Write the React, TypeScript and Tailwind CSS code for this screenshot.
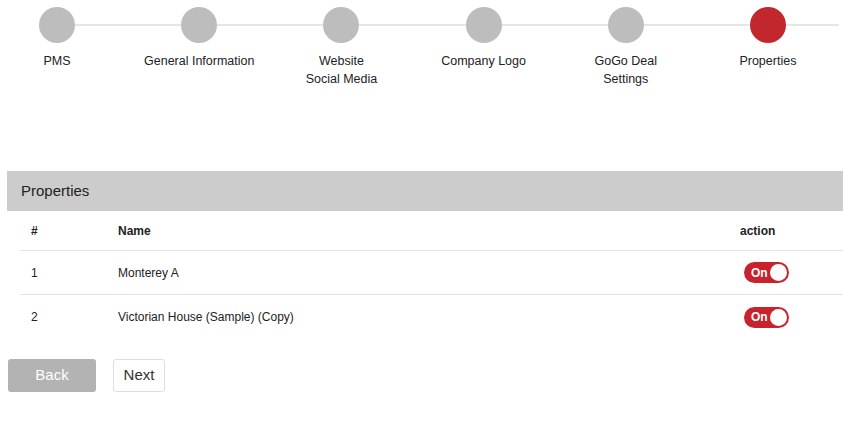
import React from "react";

const steps = [
  { label: ["PMS"], active: false },
  { label: ["General Information"], active: false },
  { label: ["Website", "Social Media"], active: false },
  { label: ["Company Logo"], active: false },
  { label: ["GoGo Deal", "Settings"], active: false },
  { label: ["Properties"], active: true },
];

const properties = [
  { id: 1, name: "Monterey A" },
  { id: 2, name: "Victorian House (Sample) (Copy)" },
];

function Toggle() {
  return (
    <div className="flex h-[21px] w-[45px] items-center justify-between rounded-full bg-[#c8232c] pl-[7px] pr-[2px]">
      <span className="text-[12px] font-bold leading-none text-white">On</span>
      <span className="h-[17px] w-[17px] rounded-full bg-white" />
    </div>
  );
}

export default function App() {
  return (
    <div className="min-h-[427px] w-[843px] overflow-hidden bg-white font-['Liberation_Sans',Arial,sans-serif] text-[#222]">
      {/* wizard steps */}
      <div className="relative -ml-[14px] w-[853px] pt-[7px]">
        <div className="absolute left-[71px] right-0 top-[24px] h-[2px] bg-[#e6e6e6]" />
        <div className="relative grid grid-cols-6">
          {steps.map((s) => (
            <div key={s.label.join(" ")} className="flex flex-col items-center">
              <div
                className={
                  s.active
                    ? "h-[36px] w-[36px] rounded-full bg-[#c1272d]"
                    : "h-[36px] w-[36px] rounded-full bg-[#bdbdbd]"
                }
              />
              <div className="mt-[9px] text-center text-[12.5px] leading-[18px]">
                {s.label.map((l) => (
                  <div key={l}>{l}</div>
                ))}
              </div>
            </div>
          ))}
        </div>
      </div>

      {/* properties panel */}
      <div className="mt-[83px] pl-[7px]">
        <div className="flex h-[40px] items-center bg-[#cccccc] pl-[14px] text-[15px]">Properties</div>
        <div className="ml-[13px]">
          <div className="flex h-[40px] items-center border-b border-[#e3e3e3] text-[12px] font-bold">
            <div className="w-[98px] pl-[11px]">#</div>
            <div className="flex-1">Name</div>
            <div className="w-[103px]">action</div>
          </div>
          {properties.map((p) => (
            <div key={p.id} className="flex h-[44px] items-center border-b border-[#e3e3e3] text-[12px] last:border-b-0">
              <div className="w-[98px] pl-[11px]">{p.id}</div>
              <div className="flex-1">{p.name}</div>
              <div className="w-[103px] pl-[4px]">
                <Toggle />
              </div>
            </div>
          ))}
        </div>
        <div className="mt-[20px] flex gap-[17px] pl-[1px]">
          <button className="h-[33px] w-[88px] rounded-[3px] bg-[#b3b3b3] text-[15px] text-white">Back</button>
          <button className="h-[33px] w-[52px] rounded-[3px] border border-[#dddddd] bg-white text-[15px] text-[#333]">
            Next
          </button>
        </div>
      </div>
    </div>
  );
}
